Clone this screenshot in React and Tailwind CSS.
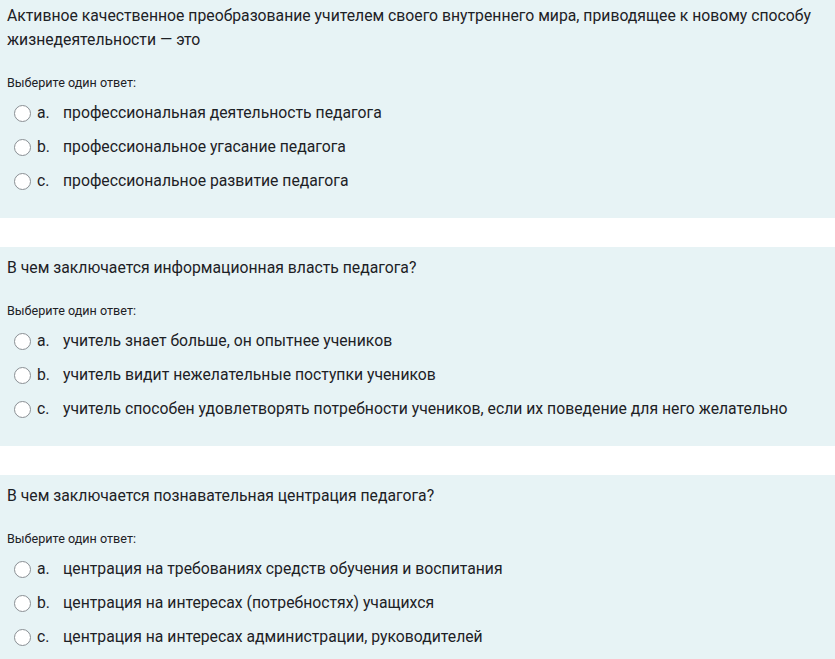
import React from 'react';

const questions = [
  {
    id: 1,
    lines: [
      'Активное качественное преобразование учителем своего внутреннего мира, приводящее к новому способу',
      'жизнедеятельности — это',
    ],
    answers: [
      'профессиональная деятельность педагога',
      'профессиональное угасание педагога',
      'профессиональное развитие педагога',
    ],
  },
  {
    id: 2,
    lines: ['В чем заключается информационная власть педагога?'],
    answers: [
      'учитель знает больше, он опытнее учеников',
      'учитель видит нежелательные поступки учеников',
      'учитель способен удовлетворять потребности учеников, если их поведение для него желательно',
    ],
  },
  {
    id: 3,
    lines: ['В чем заключается познавательная центрация педагога?'],
    answers: [
      'центрация на требованиях средств обучения и воспитания',
      'центрация на интересах (потребностях) учащихся',
      'центрация на интересах администрации, руководителей',
    ],
  },
];

const letters = ['a.', 'b.', 'c.'];

const Question = ({ q, first }) => (
  <div className={`bg-[#e7f3f5] pl-[7px] pr-2 pb-5 ${first ? 'pt-[4px]' : 'pt-[9px]'}`}>
    <p className="text-[15.75px] leading-[24px] text-[#1d2125]">
      {q.lines.map((l, i) => (
        <span key={i} className="block whitespace-nowrap">
          {l}
        </span>
      ))}
    </p>
    <p className="mt-[22px] text-[12.6px] leading-[18px] text-[#1d2125]">Выберите один ответ:</p>
    <div className="mt-[4px]">
      {q.answers.map((a, i) => (
        <label key={i} className="flex h-[34px] items-center text-[15.75px] text-[#1d2125]">
          <span className="ml-[7px] h-[17px] w-[17px] shrink-0 rounded-full border border-[#8a8f94] bg-white" />
          <span className="ml-[6px] w-[26px]">{letters[i]}</span>
          <span className="whitespace-nowrap">{a}</span>
        </label>
      ))}
    </div>
  </div>
);

export default function App() {
  return (
    <div
      className="flex min-h-screen flex-col gap-[29px] overflow-hidden bg-white"
      style={{ fontFamily: 'Roboto, "Noto Sans", sans-serif' }}
    >
      {questions.map((q, i) => (
        <Question key={q.id} q={q} first={i === 0} />
      ))}
    </div>
  );
}
